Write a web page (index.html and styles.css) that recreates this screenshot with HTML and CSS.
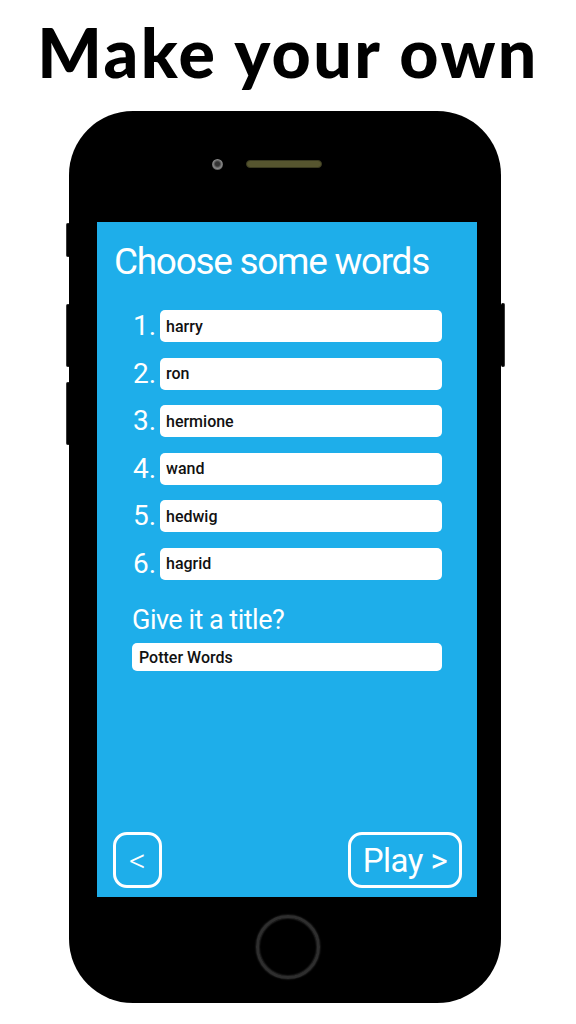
FILE: index.html
```html
<!DOCTYPE html>
<html lang="en">
<head>
    <meta charset="UTF-8">
    <meta name="viewport" content="width=device-width, initial-scale=1.0">
    <title>Make your own</title>
    <link rel="stylesheet" href="styles.css">
</head>
<body>
    <h1 class="headline">Make your own</h1>

    <div class="phone">
        <!-- tasti laterali -->
        <span class="side-btn mute"></span>
        <span class="side-btn vol-up"></span>
        <span class="side-btn vol-down"></span>
        <span class="side-btn power"></span>

        <div class="phone-top">
            <span class="camera"></span>
            <span class="speaker"></span>
        </div>

        <div class="screen">
            <h2 class="screen-title">Choose some words</h2>

            <ol class="word-list">
                <li><span class="num">1.</span><input class="word" type="text" value="harry"></li>
                <li><span class="num">2.</span><input class="word" type="text" value="ron"></li>
                <li><span class="num">3.</span><input class="word" type="text" value="hermione"></li>
                <li><span class="num">4.</span><input class="word" type="text" value="wand"></li>
                <li><span class="num">5.</span><input class="word" type="text" value="hedwig"></li>
                <li><span class="num">6.</span><input class="word" type="text" value="hagrid"></li>
            </ol>

            <label class="title-label" for="game-title">Give it a title?</label>
            <input class="title-input" id="game-title" type="text" value="Potter Words">

            <div class="nav">
                <button class="nav-btn back">&lt;</button>
                <button class="nav-btn play">Play &gt;</button>
            </div>
        </div>

        <div class="phone-bottom">
            <span class="home"></span>
        </div>
    </div>
</body>
</html>
```

FILE: styles.css
```css
* {
    margin: 0;
    padding: 0;
    box-sizing: border-box;
}

body {
    background: #fff;
    display: flex;
    flex-direction: column;
    align-items: center;
    font-family: 'Roboto', 'Noto Sans', sans-serif;
}

.headline {
    font-family: 'Lato', 'Noto Sans', sans-serif;
    font-weight: 900;
    font-size: 68px;
    line-height: 104px;
    letter-spacing: 2.4px;
    color: #000;
    white-space: nowrap;
}

/* corpo del telefono */
.phone {
    position: relative;
    align-self: flex-start;
    margin-top: 7px;
    margin-left: 69px;
    width: 432px;
    height: 892px;
    background: #000;
    border-radius: 64px;
    display: flex;
    flex-direction: column;
}

.side-btn {
    position: absolute;
    width: 4px;
    background: #000;
    border-radius: 2px;
}

.side-btn.mute,
.side-btn.vol-up,
.side-btn.vol-down {
    left: -3px;
    border-left: 1px solid #3a3a3a;
}

.side-btn.mute { top: 112px; height: 34px; }
.side-btn.vol-up { top: 193px; height: 63px; }
.side-btn.vol-down { top: 271px; height: 63px; }

.side-btn.power {
    right: -4px;
    top: 192px;
    height: 64px;
    border-right: 1px solid #3a3a3a;
}

.phone-top {
    height: 111px;
    display: flex;
    justify-content: center;
    align-items: center;
    gap: 23px;
    padding-bottom: 5px;
    padding-right: 36px;
}

.camera {
    width: 11px;
    height: 11px;
    border-radius: 50%;
    background: radial-gradient(circle at 50% 45%, #333 25%, #8a8a8a 55%, #2a2a2a 85%);
}

.speaker {
    width: 76px;
    height: 8px;
    border-radius: 4px;
    background: #56552f;
    border: 1px solid #3a3a20;
}

/* schermo */
.screen {
    margin-left: 28px;
    width: 380px;
    height: 675px;
    background: #1eaeea;
    color: #fff;
    display: flex;
    flex-direction: column;
    padding: 17px 35px 9px 17px;
}

.screen-title {
    font-weight: 400;
    font-size: 37px;
    line-height: 46px;
    letter-spacing: -1.3px;
    white-space: nowrap;
    margin-bottom: 25px;
}

.word-list {
    list-style: none;
    display: flex;
    flex-direction: column;
    gap: 15.6px;
    padding-left: 19px;
}

.word-list li {
    display: flex;
    align-items: center;
    height: 32px;
}

.num {
    width: 21px;
    margin-right: 6px;
    text-align: right;
    font-size: 28px;
    line-height: 32px;
}

.word,
.title-input {
    flex: 1;
    border: none;
    outline: none;
    background: #fff;
    border-radius: 5px;
    font-family: 'Roboto', sans-serif;
    font-weight: 500;
    font-size: 16px;
    color: #111;
}

.word {
    height: 32px;
    padding-left: 6px;
}

.title-label {
    margin: 23.7px 0 0 18px;
    font-size: 27px;
    line-height: 1.2;
    letter-spacing: -0.5px;
}

.title-input {
    flex: none;
    margin: 7px 0 0 18px;
    width: 310px;
    height: 28px;
    padding-left: 7px;
}

.nav {
    margin-top: auto;
    margin-right: -20px;
    margin-left: -1px;
    display: flex;
    justify-content: space-between;
}

.nav-btn {
    height: 56px;
    background: transparent;
    border: 3px solid #fff;
    border-radius: 14px;
    color: #fff;
    font-family: 'Roboto', sans-serif;
    font-size: 33px;
    cursor: pointer;
}

.nav-btn.back {
    width: 49px;
    font-weight: 300;
}

.nav-btn.play {
    width: 114px;
    letter-spacing: -0.5px;
}

.phone-bottom {
    flex: 1;
    display: flex;
    justify-content: center;
    padding: 18px 0 0 6px;
}

.home {
    width: 64px;
    height: 64px;
    border-radius: 50%;
    border: 3px solid #2e2e2e;
    box-shadow: inset 0 0 2px #555, 0 0 2px #444;
}
```
